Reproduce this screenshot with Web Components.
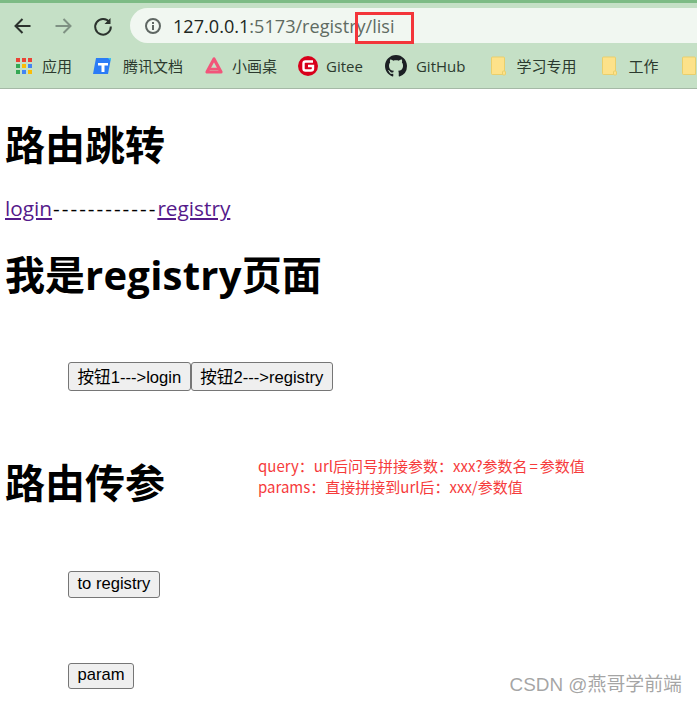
<!DOCTYPE html>
<html lang="zh">
<head>
<meta charset="utf-8">
<title>registry</title>
<style>
  html, body { margin: 0; padding: 0; background: #fff; overflow: hidden; }
  body { font-family: "Liberation Sans", "Noto Sans CJK SC", sans-serif; height: 704px; position: relative; }
</style>
</head>
<body>

<template id="bookmark-tpl">
  <style>
    :host { display: flex; align-items: center; gap: var(--gap, 8px); margin-left: var(--push, 0); flex: none; font: 15px "Open Sans", "Noto Sans CJK SC", sans-serif; color: #2b3a2e; white-space: nowrap; }
    ::slotted(svg) { display: block; flex: none; }
  </style>
  <slot name="icon"></slot><slot></slot>
</template>

<template id="chrome-tpl">
  <style>
    :host { display: block; height: 89px; background: #c5e0c6; box-sizing: border-box; border-top: 3px solid #7dbb85; border-bottom: 1px solid #a5b9a6; overflow: hidden; }
    .nav { display: flex; align-items: center; height: 40px; padding: 5px 0 0 12px; box-sizing: border-box; }
    .nav svg { display: block; flex: none; }
    .btns { display: flex; gap: 18px; width: 118px; flex: none; }
    .omni { flex: 1; height: 35px; display: flex; align-items: center; gap: 11px; padding-left: 14px; background: #f1f7f1; border-radius: 18px 0 0 18px; font: 18.100px "Open Sans", sans-serif; color: #5f6b62; white-space: nowrap; }
    .omni b { font-weight: 400; color: #202622; }
    .marks { display: flex; align-items: center; gap: 20px; height: 45px; padding-left: 14px; }
  </style>
  <div class="nav">
    <div class="btns">
      <svg width="22" height="22" viewBox="0 0 22 22" fill="none" stroke="#2b322d" stroke-width="2"><path d="M18.500 11H3.500M10.500 4l-7 7 7 7"/></svg>
      <svg width="22" height="22" viewBox="0 0 22 22" fill="none" stroke="#7f9183" stroke-width="2"><path d="M3.500 11h15M11.500 4l7 7-7 7"/></svg>
      <svg width="22" height="22" viewBox="0 0 22 22" fill="none" stroke="#2b322d" stroke-width="2"><path d="M17.500 7.500A7.800 7.800 0 1 0 18.800 11.500"/><path d="M18.500 3v6h-6" fill="#2b322d" stroke="none"/></svg>
    </div>
    <div class="omni">
      <svg width="18" height="18" viewBox="0 0 18 18"><circle cx="9" cy="9" r="7" fill="none" stroke="#5f6763" stroke-width="2"/><rect x="8" y="8" width="2" height="5" fill="#5f6763"/><rect x="8" y="5" width="2" height="2" fill="#5f6763"/></svg>
      <span><b>127.0.0.1</b>:5173/registry/lisi</span>
    </div>
  </div>
  <div class="marks"><slot></slot></div>
</template>

<template id="heading-tpl">
  <style>
    :host { display: block; }
    h1 { margin: 0; font: 700 40px/46px "Open Sans", "Noto Sans CJK SC", sans-serif; color: #000; white-space: nowrap; }
  </style>
  <h1><slot></slot></h1>
</template>

<template id="button-tpl">
  <style>
    :host { display: inline-block; }
    button { display: block; box-sizing: border-box; height: var(--h, 29px); padding: 0 8.500px 2px; margin: 0; border: 1px solid #767676; border-radius: 3px; background: #efefef; color: #000; font: 16.600px "Liberation Sans", "Noto Sans CJK SC", sans-serif; white-space: nowrap; }
  </style>
  <button type="button"><slot></slot></button>
</template>

<template id="nav-tpl">
  <style>
    :host { display: block; font: 20.800px/26px "Open Sans", "Noto Sans CJK SC", sans-serif; color: #000; white-space: nowrap; }
    a { color: #551a8b; text-decoration: underline; }
    span { letter-spacing: 2px; padding-left: 1px; }
  </style>
  <a href="#login">login</a><span>------------</span><a href="#registry">registry</a>
</template>

<template id="row-tpl">
  <style>
    :host { display: flex; padding-left: 63px; }
  </style>
  <slot></slot>
</template>

<template id="note-tpl">
  <style>
    :host { display: block; font: 15px/21px "Noto Sans CJK SC", sans-serif; color: #f63b3b; white-space: nowrap; }
  </style>
  <slot></slot>
</template>

<template id="overlay-tpl">
  <style>
    :host { display: block; position: absolute; left: 355px; top: 12px; width: 59px; height: 32px; box-sizing: border-box; border: 3px solid #f3353a; pointer-events: none; }
  </style>
</template>

<template id="mark-tpl">
  <style>
    :host { display: block; position: absolute; right: 15px; top: 673px; font: 18.900px/24px "Liberation Sans", "Noto Sans CJK SC", sans-serif; color: rgba(130,130,130,.72); white-space: nowrap; }
  </style>
  <slot></slot>
</template>

<browser-chrome>
  <book-mark>
    <svg slot="icon" width="20" height="20" viewBox="0 0 20 20">
      <rect x="2" y="2" width="4" height="4" fill="#ea4335"/><rect x="8" y="2" width="4" height="4" fill="#ea4335"/><rect x="14" y="2" width="4" height="4" fill="#ea4335"/>
      <rect x="2" y="8" width="4" height="4" fill="#34a853"/><rect x="8" y="8" width="4" height="4" fill="#fbbc05"/><rect x="14" y="8" width="4" height="4" fill="#4285f4"/>
      <rect x="2" y="14" width="4" height="4" fill="#34a853"/><rect x="8" y="14" width="4" height="4" fill="#4285f4"/><rect x="14" y="14" width="4" height="4" fill="#fbbc05"/>
    </svg>应用</book-mark>
  <book-mark style="--gap:11px">
    <svg slot="icon" width="20" height="20" viewBox="0 0 20 20">
      <path d="M4 2h15l-3 16H1z" fill="#2b7cf6"/><path d="M6 7h10v2.500h-3.500V16h-3V9.500H6z" fill="#fff"/><path d="M16 2h3l-.5 3z" fill="#3cc8f0"/>
    </svg>腾讯文档</book-mark>
  <book-mark style="--push:1px">
    <svg slot="icon" width="20" height="20" viewBox="0 0 20 20">
      <path d="M10 3 3 16h14z" fill="none" stroke="#f2557a" stroke-width="3.200" stroke-linejoin="round"/><path d="M6 13h8" stroke="#f2557a" stroke-width="2.500"/>
    </svg>小画桌</book-mark>
  <book-mark style="--gap:7px">
    <svg slot="icon" width="22" height="22" viewBox="0 0 22 22">
      <circle cx="11" cy="11" r="10" fill="#d8001b"/><path d="M16 6.500H8.500a2 2 0 0 0-2 2v5a2 2 0 0 0 2 2H14a2 2 0 0 0 2-2v-2.500h-5" fill="none" stroke="#fff" stroke-width="2.400"/>
    </svg>Gitee</book-mark>
  <book-mark style="--gap:9px;--push:2px">
    <svg slot="icon" width="22" height="22" viewBox="0 0 16 16">
      <path fill="#1c2024" d="M8 0C3.580 0 0 3.580 0 8c0 3.540 2.290 6.530 5.470 7.590.4.070.55-.17.55-.38 0-.19-.01-.82-.01-1.490-2.010.37-2.530-.49-2.690-.94-.09-.23-.48-.94-.82-1.130-.28-.15-.68-.52-.01-.53.630-.01 1.080.58 1.230.82.720 1.210 1.870.87 2.330.66.070-.52.280-.87.510-1.070-1.780-.2-3.640-.89-3.640-3.950 0-.87.310-1.590.82-2.150-.08-.2-.36-1.020.08-2.120 0 0 .67-.21 2.200.82.640-.18 1.320-.27 2-.27s1.360.09 2 .27c1.530-1.040 2.200-.82 2.200-.82.440 1.100.16 1.920.08 2.120.51.560.82 1.270.82 2.150 0 3.070-1.870 3.750-3.650 3.950.29.250.54.730.54 1.480 0 1.070-.01 1.930-.01 2.200 0 .21.150.46.550.38A8.010 8.010 0 0 0 16 8c0-4.420-3.580-8-8-8z"/>
    </svg>GitHub</book-mark>
  <book-mark style="--gap:7px;--push:4px">
    <svg slot="icon" width="20" height="20" viewBox="0 0 20 20"><path d="M3.500 1h11a1 1 0 0 1 1 1v16.500h-12a1 1 0 0 1-1-1V2a1 1 0 0 1 1-1z" fill="#fde28a" stroke="#e9cf6c"/><rect x="13.500" y="15" width="3" height="4" rx="1" fill="#fde28a" stroke="#e9cf6c"/></svg>学习专用</book-mark>
  <book-mark style="--push:4px">
    <svg slot="icon" width="20" height="20" viewBox="0 0 20 20"><path d="M3.500 1h11a1 1 0 0 1 1 1v16.500h-12a1 1 0 0 1-1-1V2a1 1 0 0 1 1-1z" fill="#fde28a" stroke="#e9cf6c"/><rect x="13.500" y="15" width="3" height="4" rx="1" fill="#fde28a" stroke="#e9cf6c"/></svg>工作</book-mark>
  <book-mark style="--push:2px">
    <svg slot="icon" width="20" height="20" viewBox="0 0 20 20"><path d="M3.500 1h11a1 1 0 0 1 1 1v16.500h-12a1 1 0 0 1-1-1V2a1 1 0 0 1 1-1z" fill="#fde28a" stroke="#e9cf6c"/></svg></book-mark>
</browser-chrome>

<url-highlight></url-highlight>

<route-page>
  <route-heading style="margin-top:33px">路由跳转</route-heading>
  <route-nav style="margin-top:27px"></route-nav>
  <route-heading style="margin-top:31px">我是<span style="letter-spacing:.25px">registry</span>页面</route-heading>
  <action-row style="margin-top:64px">
    <action-button>按钮1---&gt;login</action-button><action-button>按钮2---&gt;registry</action-button>
  </action-row>
  <param-section style="margin-top:69px">
    <route-heading>路由传参</route-heading>
    <red-note>query：url后问号拼接参数：xxx?参数名<span style="margin:0 2px">=</span>参数值<br>params：直接拼接到url后：xxx/参数值</red-note>
  </param-section>
  <action-row style="margin-top:65px"><action-button style="--h:27px">to registry</action-button></action-row>
  <action-row style="margin-top:65px"><action-button style="--h:26px">param</action-button></action-row>
</route-page>

<csdn-mark>CSDN @燕哥学前端</csdn-mark>

<script>
// each tag just clones its template into an open shadow root
function fromTemplate(tplId) {
  return class extends HTMLElement {
    constructor() {
      super();
      const root = this.attachShadow({ mode: 'open' });
      root.appendChild(document.getElementById(tplId).content.cloneNode(true));
    }
  };
}

class RoutePage extends HTMLElement {
  constructor() {
    super();
    this.attachShadow({ mode: 'open' }).innerHTML = `
      <style>
        :host { display: block; padding: 0 0 0 5px; }
      </style>
      <slot></slot>`;
  }
}

class ParamSection extends HTMLElement {
  constructor() {
    super();
    this.attachShadow({ mode: 'open' }).innerHTML = `
      <style>
        :host { display: flex; align-items: flex-start; gap: 93px; }
        ::slotted(red-note) { margin-top: -5px; }
      </style>
      <slot></slot>`;
  }
}

customElements.define('browser-chrome', fromTemplate('chrome-tpl'));
customElements.define('book-mark', fromTemplate('bookmark-tpl'));
customElements.define('url-highlight', fromTemplate('overlay-tpl'));
customElements.define('route-heading', fromTemplate('heading-tpl'));
customElements.define('route-nav', fromTemplate('nav-tpl'));
customElements.define('action-row', fromTemplate('row-tpl'));
customElements.define('action-button', fromTemplate('button-tpl'));
customElements.define('red-note', fromTemplate('note-tpl'));
customElements.define('csdn-mark', fromTemplate('mark-tpl'));
customElements.define('route-page', RoutePage);
customElements.define('param-section', ParamSection);
</script>
</body>
</html>
